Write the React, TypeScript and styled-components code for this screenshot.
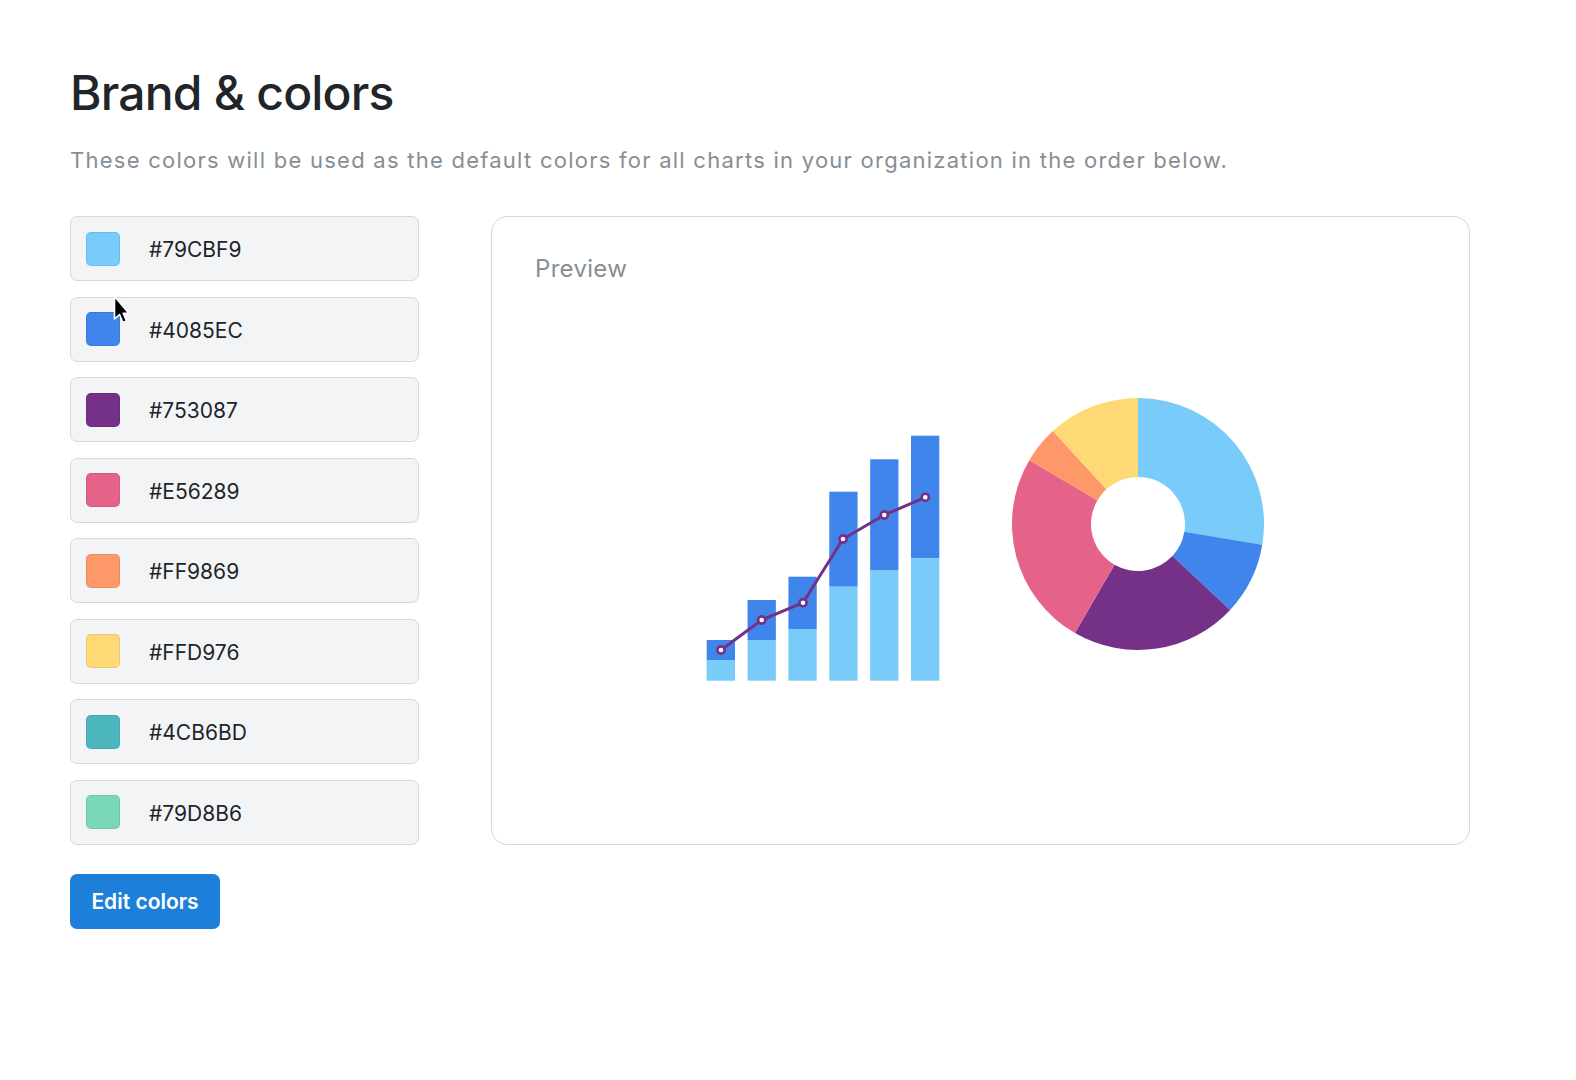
import React from 'react';
import styled, { createGlobalStyle } from 'styled-components';

const GlobalStyle = createGlobalStyle`
  html, body {
    margin: 0;
    padding: 0;
    background: #fff;
  }
  body {
    font-family: Inter, "Noto Sans", "Liberation Sans", sans-serif;
    color: #212529;
    -webkit-font-smoothing: antialiased;
  }
`;

const palette = [
  '#79CBF9',
  '#4085EC',
  '#753087',
  '#E56289',
  '#FF9869',
  '#FFD976',
  '#4CB6BD',
  '#79D8B6',
];

// stacked bars: [top of dark part, top of light part] in svg coords
const bars = [
  [245, 265],
  [205, 245],
  [181.7, 234],
  [96.7, 191.7],
  [64.3, 175],
  [40.7, 163.3],
];
const linePoints = [
  [21, 255],
  [61.7, 225],
  [103, 207.7],
  [143, 144],
  [184.3, 120],
  [225.3, 102.3],
];
const BAR_BOTTOM = 285.7;

// donut slices as [start, end] angle from 12 o'clock, clockwise
const slices = [
  { from: 0, to: 99.5, color: '#79CBF9' },
  { from: 99.5, to: 133, color: '#4085EC' },
  { from: 133, to: 210, color: '#753087' },
  { from: 210, to: 300.4, color: '#E56289' },
  { from: 300.4, to: 317.5, color: '#FF9869' },
  { from: 317.5, to: 360, color: '#FFD976' },
];

const polar = (cx: number, cy: number, r: number, deg: number) => {
  const a = (deg * Math.PI) / 180;
  return [cx + r * Math.sin(a), cy - r * Math.cos(a)];
};

const arcPath = (from: number, to: number) => {
  const cx = 128;
  const cy = 129;
  const R = 126;
  const r = 47;
  const large = to - from > 180 ? 1 : 0;
  const [x1, y1] = polar(cx, cy, R, from);
  const [x2, y2] = polar(cx, cy, R, to);
  const [x3, y3] = polar(cx, cy, r, to);
  const [x4, y4] = polar(cx, cy, r, from);
  return `M${x1} ${y1} A${R} ${R} 0 ${large} 1 ${x2} ${y2} L${x3} ${y3} A${r} ${r} 0 ${large} 0 ${x4} ${y4} Z`;
};

const BarChart = () => (
  <svg width="245" height="290" viewBox="0 0 245 290">
    {bars.map(([top, mid], i) => {
      const x = 6.7 + i * 40.86;
      return (
        <g key={i}>
          <rect x={x} y={top} width={28.3} height={mid - top} fill="#4085EC" />
          <rect x={x} y={mid} width={28.3} height={BAR_BOTTOM - mid} fill="#79CBF9" />
        </g>
      );
    })}
    <polyline
      points={linePoints.map(p => p.join(',')).join(' ')}
      fill="none"
      stroke="#753087"
      strokeWidth={3}
      strokeLinejoin="round"
    />
    {linePoints.map(([x, y], i) => (
      <circle key={i} cx={x} cy={y} r={3.6} fill="#fff" stroke="#753087" strokeWidth={2.6} />
    ))}
  </svg>
);

const DonutChart = () => (
  <svg width="256" height="290" viewBox="0 0 256 290">
    {slices.map((s, i) => (
      <path key={i} d={arcPath(s.from, s.to)} fill={s.color} />
    ))}
  </svg>
);

const Cursor = () => (
  <CursorWrap>
    <svg width="20" height="32" viewBox="0 0 20 32">
      <path
        d="M1.5 1.5 L1.5 24 L6.5 19.5 L10 27.5 L13.5 26 L10.2 18.3 L15.8 18.3 Z"
        fill="#000"
        stroke="#fff"
        strokeWidth={1.6}
        strokeLinejoin="round"
      />
    </svg>
  </CursorWrap>
);

const App = () => {
  return (
    <>
      <GlobalStyle />
      <Page>
        <Title>Brand &amp; colors</Title>
        <Subtitle>
          These colors will be used as the default colors for all charts in your organization in the
          order below.
        </Subtitle>
        <Content>
          <LeftColumn>
            <ColorList>
              {palette.map(color => (
                <ColorRow key={color}>
                  <Swatch $color={color} />
                  <HexLabel>{color}</HexLabel>
                </ColorRow>
              ))}
            </ColorList>
            <EditButton>Edit colors</EditButton>
          </LeftColumn>
          <PreviewPanel>
            <PanelLabel>Preview</PanelLabel>
            <ChartRow>
              <BarChart />
              <DonutChart />
            </ChartRow>
          </PreviewPanel>
        </Content>
        <Cursor />
      </Page>
    </>
  );
};

export default App;

const Page = styled.div`
  position: relative;
  padding: 63px 70px 0;
  width: 1400px;
`;

const Title = styled.h1`
  margin: 0;
  font-size: 48px;
  line-height: 60px;
  font-weight: 500;
  color: #212529;
  letter-spacing: -0.8px;
`;

const Subtitle = styled.p`
  margin: 21px 0 0;
  font-size: 22px;
  line-height: 33px;
  color: #868e96;
  letter-spacing: 1.25px;
`;

const Content = styled.div`
  display: flex;
  gap: 72px;
  margin-top: 39px;
  align-items: flex-start;
`;

const LeftColumn = styled.div`
  width: 349px;
  display: flex;
  flex-direction: column;
  align-items: flex-start;
`;

const ColorList = styled.div`
  width: 100%;
  display: flex;
  flex-direction: column;
  gap: 15.5px;
`;

const ColorRow = styled.div`
  box-sizing: border-box;
  height: 65px;
  display: flex;
  align-items: center;
  padding-left: 15px;
  background: #f3f4f6;
  border: 1.5px solid #d5d8dd;
  border-radius: 7px;
`;

const Swatch = styled.div<{ $color: string }>`
  box-sizing: border-box;
  width: 34px;
  height: 34px;
  border-radius: 5px;
  background: ${props => props.$color};
  border: 1.5px solid rgba(0, 0, 0, 0.08);
`;

const HexLabel = styled.span`
  margin-left: 29px;
  padding-top: 2px;
  font-size: 21px;
  color: #212529;
`;

const EditButton = styled.button`
  margin-top: 29px;
  height: 55px;
  width: 150px;
  border: none;
  border-radius: 7px;
  background: #1e7fdb;
  color: #fff;
  font-family: inherit;
  font-size: 21px;
  font-weight: 600;
  padding-top: 2px;
  cursor: pointer;
`;

const PreviewPanel = styled.div`
  box-sizing: border-box;
  flex: 1;
  height: 629px;
  border: 1.5px solid #d5d8dd;
  border-radius: 16px;
  padding: 37px 43px;
  display: flex;
  flex-direction: column;
`;

const PanelLabel = styled.div`
  font-size: 24px;
  line-height: 30px;
  color: #868e96;
  letter-spacing: 0.3px;
`;

const ChartRow = styled.div`
  margin-top: 111px;
  display: flex;
  justify-content: center;
  gap: 65px;
  padding-left: 5px;
`;

const CursorWrap = styled.div`
  position: absolute;
  left: 112.5px;
  top: 294.5px;
  pointer-events: none;
  line-height: 0;
`;
